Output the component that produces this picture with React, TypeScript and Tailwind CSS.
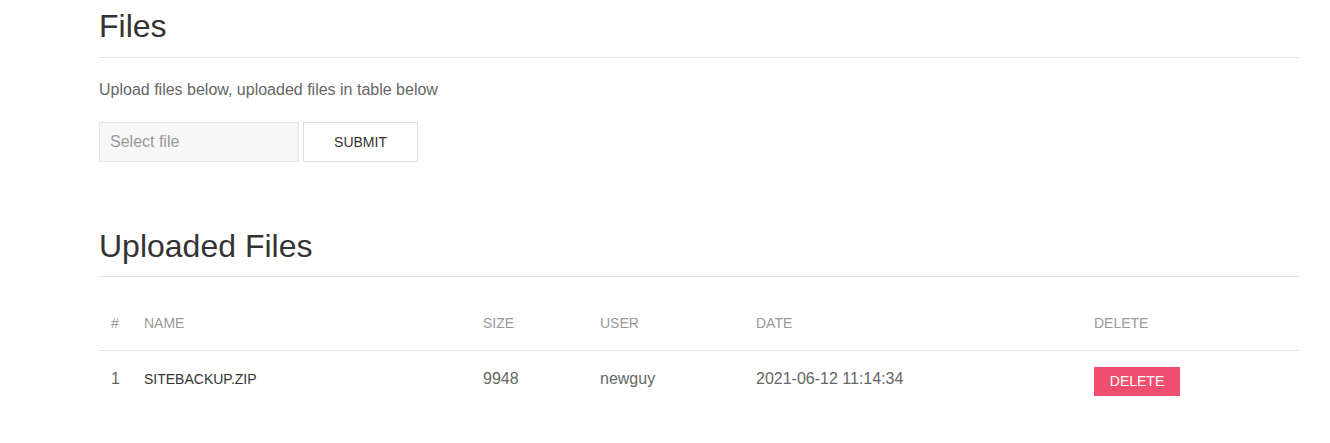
export default function App() {
  const rows = [{ id: 1, name: 'sitebackup.zip', size: 9948, user: 'newguy', date: '2021-06-12 11:14:34' }]

  return (
    <div className="min-h-screen bg-white font-['Liberation_Sans',Arial,sans-serif]">
      <div className="ml-[99px] w-[1200px] pt-[9px]">
        <h1 className="border-b border-[#e5e5e5] pb-[13px] text-[32px] leading-[35px] text-[#333]">Files</h1>
        <p className="mt-[20px] text-[16px] leading-[24px] text-[#666]">Upload files below, uploaded files in table below</p>

        <form className="mt-[20px] flex gap-[4px]" onSubmit={(e) => e.preventDefault()}>
          <div className="flex h-[40px] w-[200px] items-center border border-[#e3e3e3] bg-[#f7f7f7] pl-[10px] text-[16px] text-[#999]">
            Select file
          </div>
          <button className="h-[40px] w-[115px] border border-[#e0e0e0] bg-white text-[14px] text-[#333] uppercase">
            Submit
          </button>
        </form>

        <h2 className="mt-[67px] border-b border-[#e5e5e5] pb-[12px] text-[32px] leading-[35px] text-[#333]">Uploaded Files</h2>

        <table className="mt-[23px] w-full table-fixed border-collapse text-left">
          <colgroup>
            <col className="w-[33px]" />
            <col className="w-[339px]" />
            <col className="w-[117px]" />
            <col className="w-[156px]" />
            <col className="w-[338px]" />
            <col className="w-[217px]" />
          </colgroup>
          <thead>
            <tr className="border-b border-[#e5e5e5] text-[14px] font-normal uppercase text-[#999]">
              <th className="h-[50px] px-[12px] pb-[2px] font-normal">#</th>
              <th className="px-[12px] pb-[2px] font-normal">Name</th>
              <th className="px-[12px] pb-[2px] font-normal">Size</th>
              <th className="px-[12px] pb-[2px] font-normal">User</th>
              <th className="px-[12px] pb-[2px] font-normal">Date</th>
              <th className="px-[12px] pb-[2px] font-normal">Delete</th>
            </tr>
          </thead>
          <tbody>
            {rows.map((r) => (
              <tr key={r.id} className="text-[16px] text-[#666]">
                <td className="h-[60px] px-[12px] pb-[2px]">{r.id}</td>
                <td className="px-[12px] pb-[2px] text-[14px] uppercase text-[#333]">{r.name}</td>
                <td className="px-[12px] pb-[2px]">{r.size}</td>
                <td className="px-[12px] pb-[2px]">{r.user}</td>
                <td className="px-[12px] pb-[2px]">{r.date}</td>
                <td className="px-[12px] pt-[3px]">
                  <button className="h-[29px] w-[86px] bg-[#f04e6e] text-[14px] uppercase text-white">Delete</button>
                </td>
              </tr>
            ))}
          </tbody>
        </table>
      </div>
    </div>
  )
}
